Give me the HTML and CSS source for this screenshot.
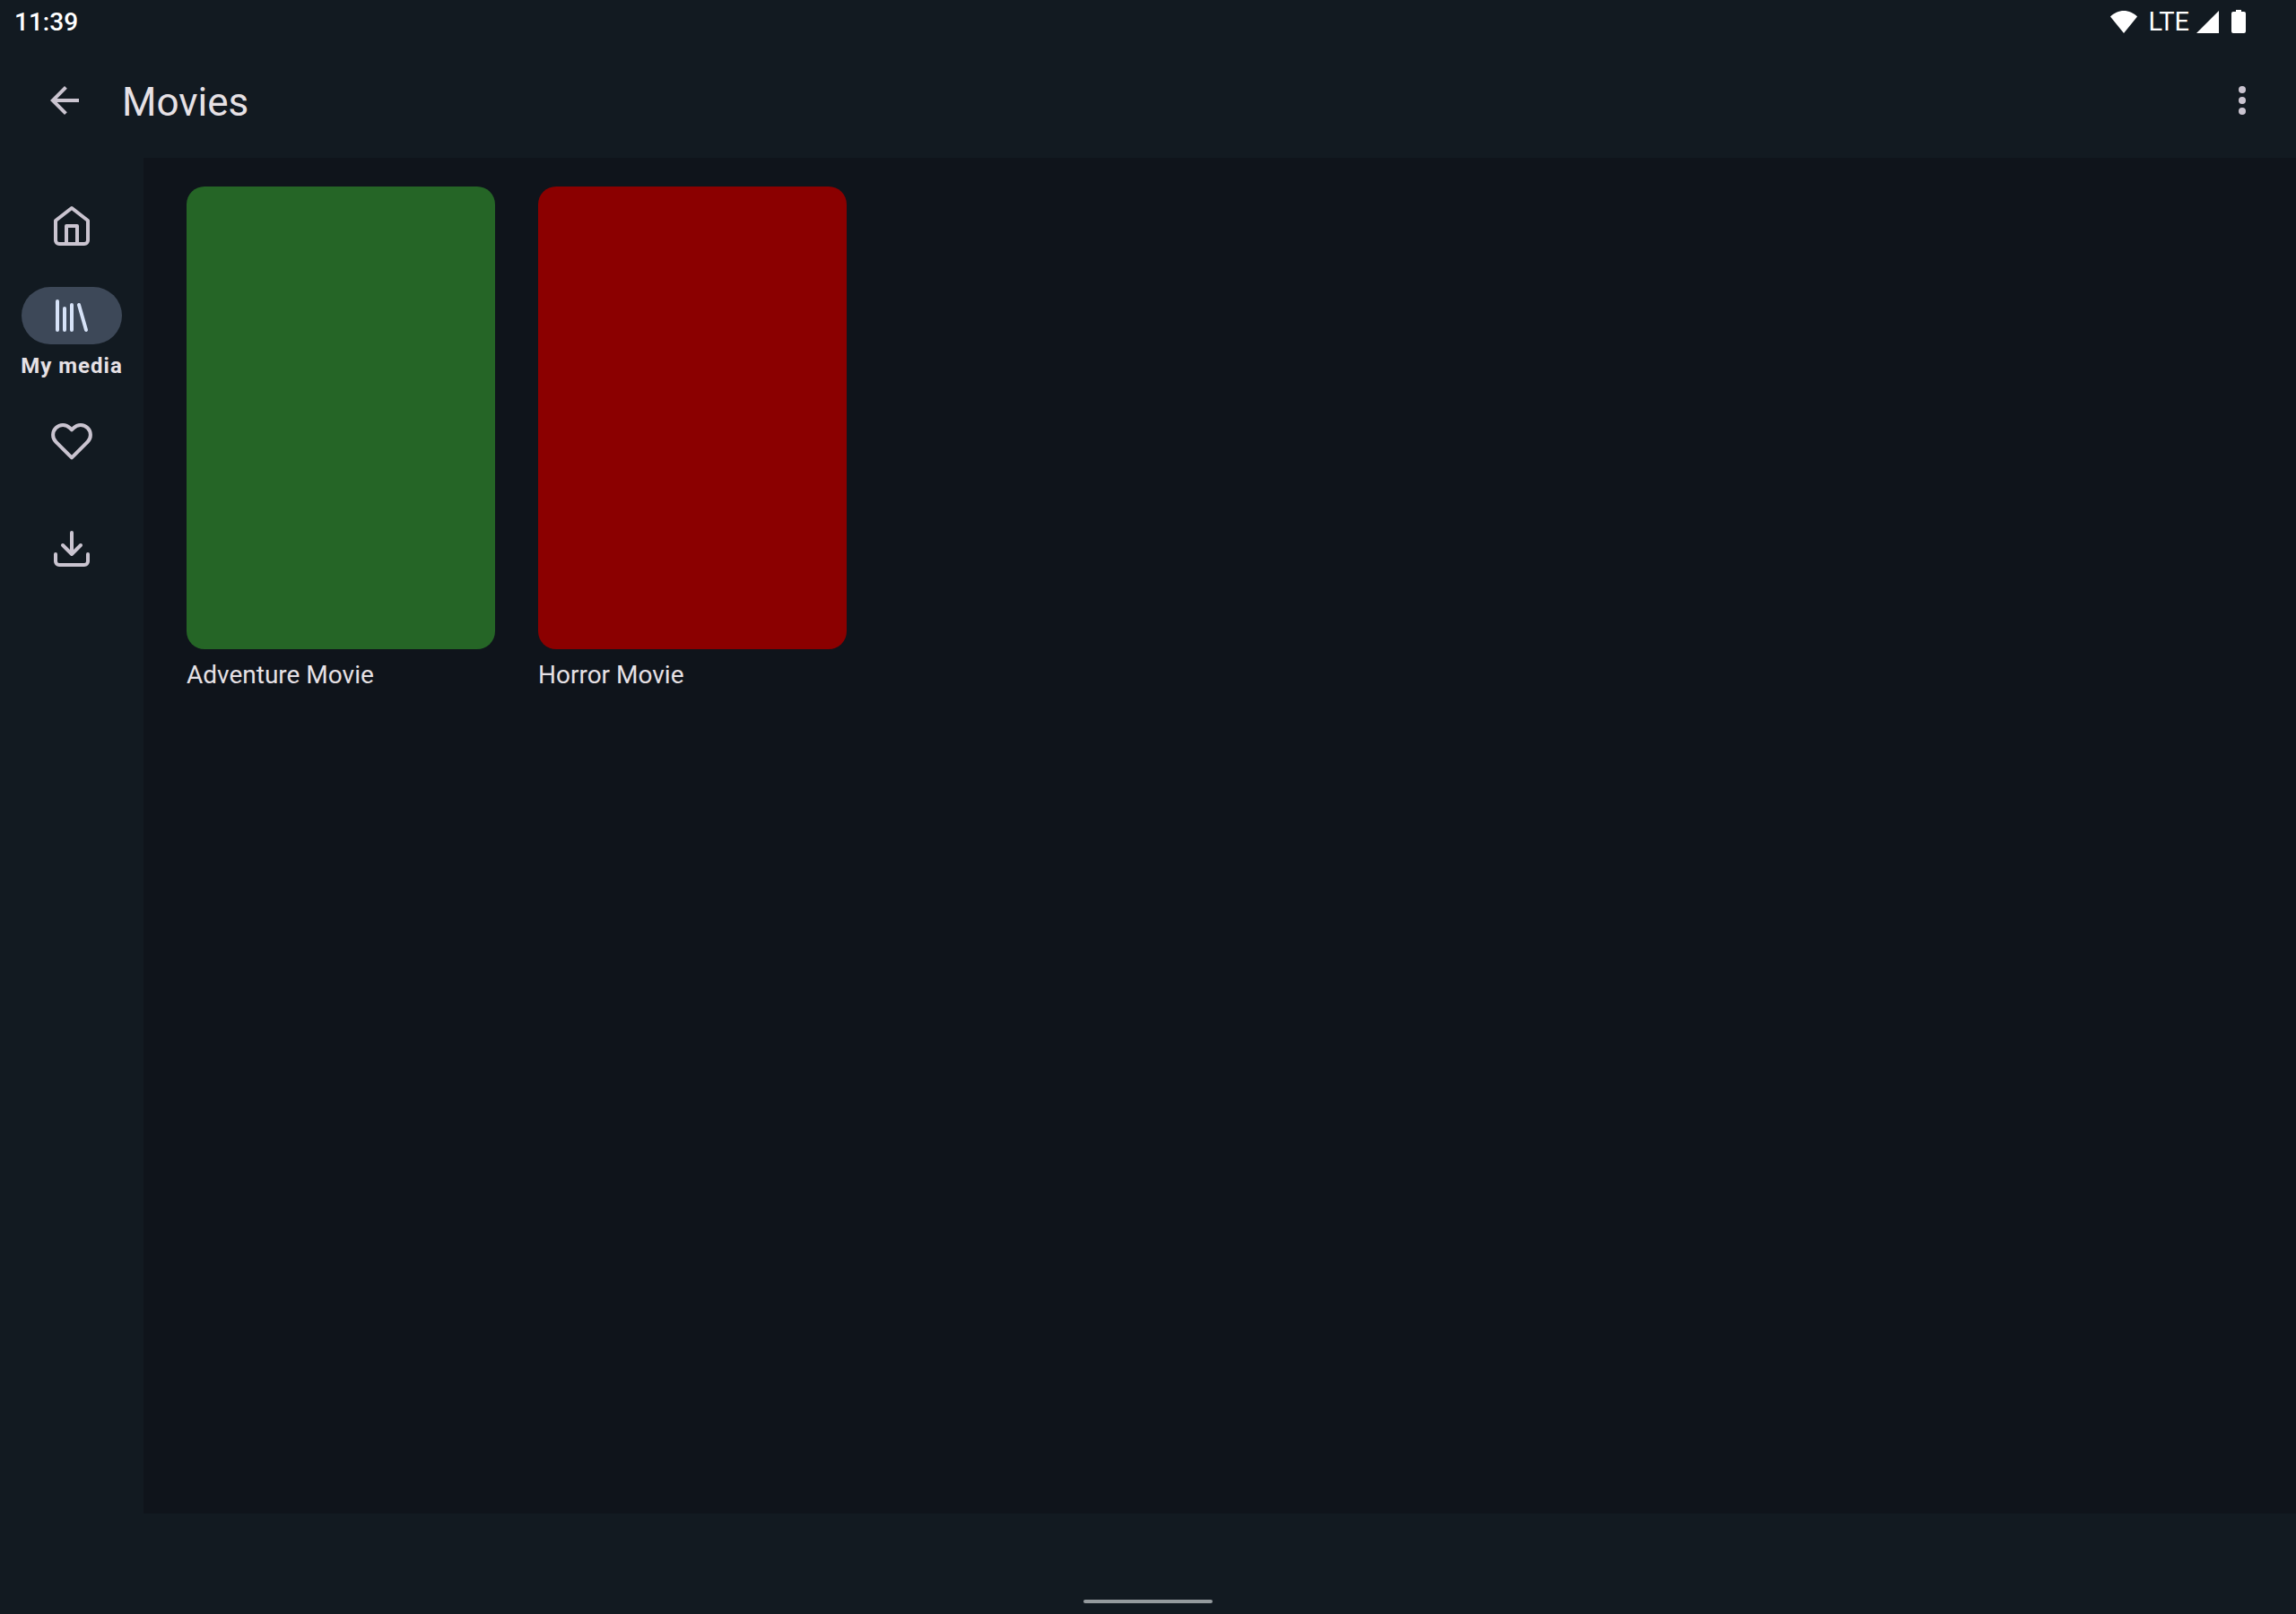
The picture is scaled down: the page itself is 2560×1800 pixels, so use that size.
FILE: index.html
```
<!DOCTYPE html>
<html lang="en">
<head>
<meta charset="utf-8">
<meta name="viewport" content="width=device-width, initial-scale=1">
<title>Movies</title>
<link rel="stylesheet" href="styles.css">
</head>
<body>
<div class="app">
  <div class="status">
    <time class="clock">11:39</time>
    <div class="signals">
      <svg class="wifi" viewBox="0 0 30 25" aria-hidden="true"><path d="M0 6.500C4 2.500 9.500 0 15 0s11 2.500 15 6.500L15 25z"/></svg>
      <span class="network">LTE</span>
      <svg class="cell" viewBox="0 0 25 25" aria-hidden="true"><path d="M25 0v25H0z"/></svg>
      <svg class="battery" viewBox="0 0 16 26" aria-hidden="true"><path d="M5 0h6v2h3a2 2 0 0 1 2 2v20a2 2 0 0 1-2 2H2a2 2 0 0 1-2-2V4a2 2 0 0 1 2-2h3z"/></svg>
    </div>
  </div>
  <header class="toolbar">
    <button class="icon-button" type="button" aria-label="Back">
      <svg class="icon-fill" viewBox="0 0 24 24"><path d="M20 11H7.830l5.590-5.590L12 4l-8 8 8 8 1.410-1.410L7.830 13H20z"/></svg>
    </button>
    <h1 class="title">Movies</h1>
    <button class="icon-button" type="button" aria-label="More options">
      <svg class="icon-fill" viewBox="0 0 24 24"><circle cx="12" cy="6" r="2"/><circle cx="12" cy="12" r="2"/><circle cx="12" cy="18" r="2"/></svg>
    </button>
  </header>
  <div class="body">
    <nav class="rail">
      <a class="rail-item" href="#home" aria-label="Home">
        <svg class="icon-line" viewBox="0 0 24 24"><path d="M3 9l9-7 9 7v11a2 2 0 0 1-2 2H5a2 2 0 0 1-2-2z"/><path d="M9 22V12h6v10"/></svg>
      </a>
      <a class="rail-item selected" href="#media" aria-current="page">
        <span class="pill"><svg class="icon-line" viewBox="0 0 24 24"><path d="M16 6l4 14M12 6v14M8 8v12M4 4v16"/></svg></span>
        <span class="rail-label">My media</span>
      </a>
      <a class="rail-item" href="#favorites" aria-label="Favorites">
        <svg class="icon-line" viewBox="0 0 24 24"><path d="M20.840 4.610a5.500 5.500 0 0 0-7.780 0L12 5.670l-1.060-1.060a5.500 5.500 0 0 0-7.780 7.780l1.060 1.060L12 21.230l7.780-7.780 1.060-1.060a5.500 5.500 0 0 0 0-7.780z"/></svg>
      </a>
      <a class="rail-item" href="#downloads" aria-label="Downloads">
        <svg class="icon-line" viewBox="0 0 24 24"><path d="M21 15v4a2 2 0 0 1-2 2H5a2 2 0 0 1-2-2v-4M7 10l5 5 5-5M12 15V3"/></svg>
      </a>
    </nav>
    <main class="content">
      <a class="movie" href="#adventure"><span class="poster green"></span><span class="name">Adventure Movie</span></a>
      <a class="movie" href="#horror"><span class="poster red"></span><span class="name">Horror Movie</span></a>
    </main>
  </div>
  <footer class="gesture"><span class="handle"></span></footer>
</div>
</body>
</html>
```
FILE: styles.css
```
* {
  box-sizing: border-box;
}

body {
  margin: 0;
  background: #121a21;
  color: #e6e1e5;
  font-family: Roboto, "Noto Sans", sans-serif;
}

a {
  color: inherit;
  text-decoration: none;
}

.app {
  display: flex;
  flex-direction: column;
  min-height: 100vh;
}

.status {
  display: flex;
  justify-content: space-between;
  align-items: center;
  height: 48px;
  padding: 0 56px 0 16px;
  color: #fff;
  font-size: 28px;
  line-height: 48px;
}

.clock {
  padding-top: 2px;
  font-weight: 500;
}

.signals {
  display: flex;
  align-items: center;
}

.signals svg {
  fill: #fff;
}

.network {
  padding: 0 8px 0 12px;
  font-size: 29px;
}

.wifi {
  width: 30px;
  height: 25px;
}

.cell {
  width: 25px;
  height: 25px;
  margin-right: 14px;
}

.battery {
  width: 16px;
  height: 26px;
}

.toolbar {
  display: flex;
  align-items: center;
  height: 128px;
  padding: 0 12px 0 24px;
}

.icon-button {
  display: flex;
  align-items: center;
  justify-content: center;
  width: 96px;
  height: 96px;
  padding: 0;
  border: 0;
  background: none;
}

.icon-fill {
  width: 48px;
  height: 48px;
  fill: #cac4d0;
}

.title {
  flex: 1;
  margin: 0;
  padding: 4px 0 0 16px;
  font-size: 44px;
  font-weight: 400;
  line-height: 52px;
}

.body {
  display: flex;
  flex: 1;
}

.rail {
  display: flex;
  flex-direction: column;
  width: 160px;
  padding-top: 16px;
}

.rail-item {
  display: flex;
  flex-direction: column;
  align-items: center;
  justify-content: center;
  height: 120px;
}

.selected {
  justify-content: flex-start;
  padding-top: 8px;
  gap: 8px;
}

.icon-line {
  width: 48px;
  height: 48px;
  fill: none;
  stroke: #cac4d0;
  stroke-width: 2;
  stroke-linecap: round;
  stroke-linejoin: round;
}

.pill {
  display: flex;
  align-items: center;
  justify-content: center;
  width: 112px;
  height: 64px;
  border-radius: 32px;
  background: #3d4858;
}

.pill .icon-line {
  stroke: #d7e3f8;
}

.rail-label {
  font-size: 24px;
  font-weight: 700;
  line-height: 32px;
  letter-spacing: 1px;
}

.content {
  display: flex;
  flex: 1;
  flex-wrap: wrap;
  align-content: flex-start;
  gap: 48px;
  padding: 32px 48px;
  background: #0f141b;
}

.movie {
  display: flex;
  flex-direction: column;
  gap: 8px;
  width: 344px;
}

.poster {
  aspect-ratio: 2 / 3;
  border-radius: 20px;
}

.green {
  background: #256526;
}

.red {
  background: #8b0000;
}

.name {
  font-size: 28px;
  line-height: 42px;
}

.gesture {
  display: flex;
  align-items: flex-end;
  justify-content: center;
  height: 112px;
  padding-bottom: 12px;
}

.handle {
  width: 144px;
  height: 4px;
  border-radius: 2px;
  background: #949a9d;
}
```
